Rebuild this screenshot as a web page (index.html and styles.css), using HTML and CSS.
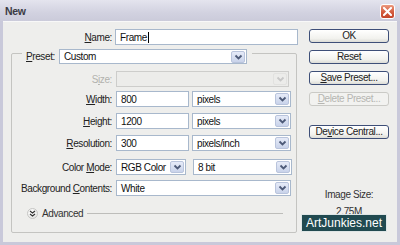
FILE: index.html
```html
<!DOCTYPE html>
<html lang="en">
<head>
    <meta charset="UTF-8">
    <title>New</title>
    <link rel="stylesheet" href="styles.css">
</head>
<body>
    <div class="window">
        <div class="titlebar">
            <span class="title">New</span>
            <span class="close">
                <svg width="9" height="9" viewBox="0 0 9 9"><path d="M1 1 L8 8 M8 1 L1 8" stroke="#fff" stroke-width="2" stroke-linecap="square"/></svg>
            </span>
        </div>

        <div class="client">
            <div class="form">
                <div class="name-row">
                    <span class="label"><u>N</u>ame:</span>
                    <div class="field name-field">Frame<span class="caret"></span></div>
                </div>

                <div class="group">
                    <div class="legend">
                        <span class="legend-label"><u>P</u>reset:</span>
                        <div class="select preset">
                            <span class="value">Custom</span>
                            <span class="arrow"><svg width="9" height="6" viewBox="0 0 9 6"><path d="M1.5 1.5 L4.5 4.5 L7.5 1.5" fill="none" stroke="#4d5a78" stroke-width="1.8"/></svg></span>
                        </div>
                    </div>

                    <div class="rows">
                        <div class="row row-size">
                            <span class="label disabled">S<u>i</u>ze:</span>
                            <div class="select disabled w-size">
                                <span class="value"></span>
                                <span class="arrow"><svg width="9" height="6" viewBox="0 0 9 6"><path d="M1.5 1.5 L4.5 4.5 L7.5 1.5" fill="none" stroke="#c8c8c8" stroke-width="1.8"/></svg></span>
                            </div>
                        </div>
                        <div class="row">
                            <span class="label"><u>W</u>idth:</span>
                            <div class="controls">
                                <div class="field w-num">800</div>
                                <div class="select w-unit">
                                    <span class="value">pixels</span>
                                    <span class="arrow"><svg width="9" height="6" viewBox="0 0 9 6"><path d="M1.5 1.5 L4.5 4.5 L7.5 1.5" fill="none" stroke="#4d5a78" stroke-width="1.8"/></svg></span>
                                </div>
                            </div>
                        </div>
                        <div class="row">
                            <span class="label"><u>H</u>eight:</span>
                            <div class="controls">
                                <div class="field w-num">1200</div>
                                <div class="select w-unit">
                                    <span class="value">pixels</span>
                                    <span class="arrow"><svg width="9" height="6" viewBox="0 0 9 6"><path d="M1.5 1.5 L4.5 4.5 L7.5 1.5" fill="none" stroke="#4d5a78" stroke-width="1.8"/></svg></span>
                                </div>
                            </div>
                        </div>
                        <div class="row">
                            <span class="label"><u>R</u>esolution:</span>
                            <div class="controls">
                                <div class="field w-num">300</div>
                                <div class="select w-unit">
                                    <span class="value">pixels/inch</span>
                                    <span class="arrow"><svg width="9" height="6" viewBox="0 0 9 6"><path d="M1.5 1.5 L4.5 4.5 L7.5 1.5" fill="none" stroke="#4d5a78" stroke-width="1.8"/></svg></span>
                                </div>
                            </div>
                        </div>
                        <div class="row row-mode">
                            <span class="label">Color <u>M</u>ode:</span>
                            <div class="controls wide-gap">
                                <div class="select w-mode">
                                    <span class="value">RGB Color</span>
                                    <span class="arrow"><svg width="9" height="6" viewBox="0 0 9 6"><path d="M1.5 1.5 L4.5 4.5 L7.5 1.5" fill="none" stroke="#4d5a78" stroke-width="1.8"/></svg></span>
                                </div>
                                <div class="select w-unit">
                                    <span class="value">8 bit</span>
                                    <span class="arrow"><svg width="9" height="6" viewBox="0 0 9 6"><path d="M1.5 1.5 L4.5 4.5 L7.5 1.5" fill="none" stroke="#4d5a78" stroke-width="1.8"/></svg></span>
                                </div>
                            </div>
                        </div>
                        <div class="row row-bg">
                            <span class="label">Background <u>C</u>ontents:</span>
                            <div class="select w-bg">
                                <span class="value">White</span>
                                <span class="arrow"><svg width="9" height="6" viewBox="0 0 9 6"><path d="M1.5 1.5 L4.5 4.5 L7.5 1.5" fill="none" stroke="#4d5a78" stroke-width="1.8"/></svg></span>
                            </div>
                        </div>
                    </div>

                    <div class="advanced">
                        <span class="adv-icon">
                            <svg width="7" height="7" viewBox="0 0 7 7"><path d="M1 1 L3.5 3 L6 1 M1 4 L3.5 6 L6 4" fill="none" stroke="#333" stroke-width="1.2"/></svg>
                        </span>
                        <span class="adv-text">Advanced</span>
                        <span class="adv-line"></span>
                    </div>
                </div>
            </div>

            <div class="side">
                <button class="btn">OK</button>
                <button class="btn">Reset</button>
                <button class="btn"><u>S</u>ave Preset...</button>
                <button class="btn" disabled><u>D</u>elete Preset...</button>
                <button class="btn btn-device">De<u>v</u>ice Central...</button>
                <div class="image-size">
                    <div>Image Size:</div>
                    <div class="size-value">2.75M</div>
                </div>
            </div>
        </div>

        <div class="watermark">ArtJunkies.net</div>
    </div>
</body>
</html>
```

FILE: styles.css
```css
body {
    margin: 0;
    padding: 0;
    font-family: Tahoma, 'Liberation Sans', Arial, sans-serif;
    font-size: 10px;
    letter-spacing: -0.4px;
    color: #222;
}
.window {
    position: relative;
    width: 400px;
    height: 245px;
    box-sizing: border-box;
    padding: 0 3px 3px 3px;
    background: #c9c9da;
    overflow: hidden;
}
.titlebar {
    height: 21px;
    margin: 0 -3px;
    padding: 0 5px 0 5px;
    display: flex;
    align-items: center;
    justify-content: space-between;
    background: linear-gradient(to bottom, #e4e4ee, #d2d2e0 60%, #cbcbda);
}
.title {
    font-size: 10.5px;
    font-weight: bold;
    letter-spacing: -0.3px;
    color: #3b3b44;
    margin-top: 1px;
}
.close {
    width: 13px;
    height: 13px;
    margin-top: 2px;
    border: 1px solid #fff;
    border-radius: 3px;
    background: linear-gradient(to bottom, #ec9a80, #d35a3c 55%, #c4452a);
    display: flex;
    align-items: center;
    justify-content: center;
}
.client {
    height: 221px;
    display: flex;
    background: #eeeeec;
    border-top: 1px solid #f8f8f8;
    box-sizing: border-box;
}
.form {
    width: 306px;
    padding-left: 8px;
    box-sizing: border-box;
}
.name-row {
    display: flex;
    align-items: center;
    margin-top: 7px;
}
.name-row .label {
    width: 101px;
    margin-right: 3px;
}
.label {
    text-align: right;
    white-space: nowrap;
}
.label.disabled {
    color: #b2b2ae;
}
.field, .select {
    height: 16px;
    box-sizing: border-box;
    border: 1px solid #a8b8cc;
    background: #fff;
    color: #111;
    display: flex;
    align-items: center;
    padding-left: 4px;
    white-space: nowrap;
}
.name-field {
    width: 183px;
}
.caret {
    width: 1px;
    height: 11px;
    background: #000;
    margin-left: 1px;
}
.select {
    justify-content: space-between;
    padding-right: 1px;
}
.select.disabled {
    background: #ececea;
    border-color: #cdcdcb;
}
.arrow {
    width: 14px;
    height: 12px;
    box-sizing: border-box;
    border: 1px solid #b9c4dc;
    border-radius: 2px;
    background: linear-gradient(to bottom, #e6ebf8, #c9d3ea);
    display: flex;
    align-items: center;
    justify-content: center;
}
.select.disabled .arrow {
    background: #ececea;
    border-color: #e2e2e0;
}
.group {
    width: 286px;
    height: 180px;
    margin-top: 8px;
    box-sizing: border-box;
    border: 1px solid #c4c4c1;
    border-radius: 2px;
}
.legend {
    display: flex;
    align-items: center;
    width: fit-content;
    margin: -5px 0 0 10px;
    padding: 0 5px 0 4px;
    background: #eeeeec;
}
.legend-label {
    width: 33px;
}
.preset {
    width: 188px;
    height: 15px;
}
.rows {
    display: flex;
    flex-direction: column;
    gap: 6px;
    margin-top: 7px;
}
.row {
    display: flex;
    align-items: center;
}
.row .label {
    width: 100px;
    margin-right: 4px;
}
.row-size {
    margin-bottom: -2px;
}
.row-mode {
    margin-top: 2px;
}
.row-bg {
    margin-top: -1px;
}
.controls {
    display: flex;
    gap: 3px;
}
.controls.wide-gap {
    gap: 7px;
}
.w-size { width: 173px; }
.w-num { width: 73px; }
.w-unit { width: 99px; }
.w-mode { width: 70px; }
.w-bg { width: 175px; }
.advanced {
    display: flex;
    align-items: center;
    margin: 12px 13px 0 15px;
}
.adv-icon {
    flex: none;
    width: 11px;
    height: 11px;
    box-sizing: border-box;
    border-radius: 50%;
    border: 1px solid #c6c6c4;
    background: radial-gradient(circle at 40% 35%, #ffffff, #e2e2e0);
    display: flex;
    align-items: center;
    justify-content: center;
}
.adv-text {
    flex: none;
    margin-left: 4px;
    color: #333;
}
.adv-line {
    flex: 1;
    height: 1px;
    margin-left: 4px;
    background: #bdbdba;
}
.side {
    width: 80px;
    padding-top: 7px;
    display: flex;
    flex-direction: column;
    gap: 7px;
}
.btn {
    width: 80px;
    height: 14px;
    padding: 0;
    box-sizing: border-box;
    border: 1px solid #3e4f78;
    border-radius: 3px;
    background: linear-gradient(to bottom, #ffffff, #f2f2ee 70%, #dcdcd6);
    font-family: inherit;
    font-size: 10px;
    letter-spacing: -0.4px;
    color: #222;
    line-height: 12px;
}
.btn:disabled {
    border-color: #cacac6;
    background: #f2f2f0;
    color: #b6b6b2;
}
.btn-device {
    margin-top: 12px;
}
.image-size {
    margin-top: 43px;
    text-align: center;
    line-height: 12px;
    color: #333;
}
.size-value {
    margin-top: 5px;
}
.watermark {
    position: absolute;
    left: 301px;
    top: 214px;
    width: 86px;
    height: 18px;
    box-sizing: border-box;
    border: 1px solid #dfe6e6;
    background: #214a50;
    color: #fff;
    font-family: 'Liberation Sans', Arial, sans-serif;
    font-size: 12px;
    letter-spacing: 0;
    line-height: 16px;
    text-align: center;
}
```
